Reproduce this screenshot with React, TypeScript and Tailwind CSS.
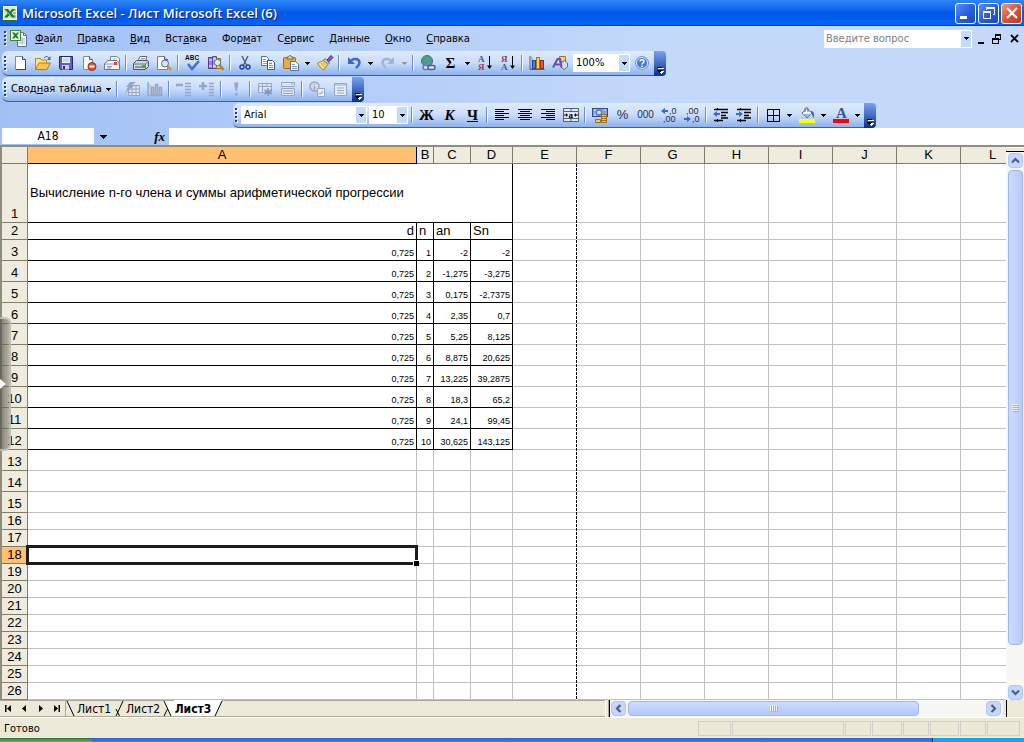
import type { ReactNode } from "react";

type IconProps = { children: ReactNode };

const Svg = ({ children }: IconProps) => (
  <svg width="16" height="16" viewBox="0 0 16 16" fill="none" aria-hidden="true" className="block shrink-0 overflow-visible">
    {children}
  </svg>
);

const Arrow = ({ faded = false, large = false }: { faded?: boolean; large?: boolean }) =>
  large ? (
    <svg width="7" height="4" viewBox="0 0 7 4" shapeRendering="crispEdges" aria-hidden="true" className="block shrink-0">
      <path d="M0 0h7v1H6v1H5v1H4v1H3V3H2V2H1V1H0z" fill="#000" />
    </svg>
  ) : (
    <svg width="5" height="3" viewBox="0 0 5 3" shapeRendering="crispEdges" aria-hidden="true" className="block shrink-0">
      <path d="M0 0h5v1H4v1H3v1H2V2H1V1H0z" fill={faded ? "#8d93a8" : "#000"} />
    </svg>
  );

const Grip = () => (
  <span className="flex w-1.5 shrink-0 justify-center">
    <svg width="3" height="15" viewBox="0 0 3 15" shapeRendering="crispEdges" aria-hidden="true">
      {[0, 4, 8, 12].map((y) => (
        <g key={y}>
          <rect x="1" y={y + 1} width="2" height="2" fill="#fff" />
          <rect x="0" y={y} width="2" height="2" fill="#27417c" />
        </g>
      ))}
    </svg>
  </span>
);

const Sep = () => (
  <span className="flex w-1.5 shrink-0 justify-center">
    <span className="h-4 w-0.5 border-l border-[#6a8ccb] border-r border-r-[#f1f9ff]" />
  </span>
);

const Tool = ({ label, children }: { label: string; children: ReactNode }) => (
  <button type="button" aria-label={label} className="flex h-6 w-[23px] shrink-0 items-center justify-center">
    {children}
  </button>
);

const Drop = ({ label, faded }: { label: string; faded?: boolean }) => (
  <button type="button" aria-label={label} className="flex h-6 w-[11px] shrink-0 items-center justify-center">
    <Arrow faded={faded} />
  </button>
);

const Bar = ({ label, className, children }: { label: string; className: string; children: ReactNode }) => (
  <div
    role="toolbar"
    aria-label={label}
    className={`flex h-[25px] w-fit items-center rounded-md border-b border-[#3b619c] bg-linear-to-b from-[#dfebfd] via-[#c8dcfb] to-[#8cb2ee] ${className}`}
  >
    <Grip />
    {children}
    <button
      type="button"
      aria-label="Параметры панели"
      className="ml-px flex h-[25px] w-3 shrink-0 items-end justify-center rounded-r-sm bg-linear-to-b from-[#7ba2ed] via-[#3f6bc4] to-[#052f8e] pb-0.5"
    >
      <svg width="7" height="7" viewBox="0 0 7 7" shapeRendering="crispEdges" aria-hidden="true">
        <path d="M1 1h6v1H1zM1 4h6v1H6v1H5v1H4V6H3V5H1z" fill="#fff" />
        <path d="M0 0h5v1H0zM0 3h5v1H4v1H3v1H2V5H1V4H0z" fill="#000" />
      </svg>
    </button>
  </div>
);

const Combo = ({ label, value, options, className }: { label: string; value: string; options: string[]; className: string }) => (
  <span className={`relative flex h-[18px] shrink-0 border border-white bg-white ${className}`}>
    <select aria-label={label} defaultValue={value} className="w-full appearance-none bg-transparent pl-0.5 text-[11px] leading-4 outline-none">
      {options.map((o) => (
        <option key={o}>{o}</option>
      ))}
    </select>
    <span className="pointer-events-none absolute inset-y-0 right-0 flex w-2.5 items-center justify-center bg-[#c3daf9]">
      <Arrow />
    </span>
  </span>
);

/* ---------- Иконки ---------- */

const XlsIcon = () => (
  <Svg>
    <rect x="0.5" y="0.5" width="15" height="15" rx="1" fill="#f3faf0" stroke="#2c6b2c" />
    <rect x="2" y="2" width="12" height="12" fill="#d6ecd0" />
    <path d="M11 5h3M11 8h3M11 11h3" stroke="#6a9c66" />
    <path d="M2 4h4l2 2.500L10 4h3L9.500 8l4 4.500H9.500L7.500 10l-2 2.500H2L5.800 8z" fill="#217a2b" />
    <path d="M3 4.500l7 8" stroke="#7cc47c" />
  </Svg>
);

const BookIcon = () => (
  <svg width="17" height="17" viewBox="0 0 17 17" fill="none" aria-hidden="true">
    <path d="M7.500 2.500h6l3 3v11h-9z" fill="#fff" stroke="#5572a8" />
    <path d="M13.500 2.500v3h3" stroke="#5572a8" />
    <path d="M10 9h5M10 11h5M8 13h7M12 7v8" stroke="#a5b8dd" />
    <rect x="0.500" y="0.500" width="10" height="10" fill="#e9f6e4" stroke="#3c8b3c" />
    <path d="M2 2.500h2.500L5.800 4l1.200-1.500h2L6.800 5.500 9 8.500H6.800L5.500 7 4.200 8.500H2l2.300-3z" fill="#217a2b" />
  </svg>
);

const NewIcon = () => (
  <Svg>
    <path d="M3.500 1.500h7l3 3v10h-10z" fill="#fff" stroke="#7b8bb0" />
    <path d="M4 14.500h9.500V5" stroke="#33456e" />
    <path d="M10.500 1.500v3h3" fill="#cbd8ee" stroke="#33456e" />
  </Svg>
);

const OpenIcon = () => (
  <Svg>
    <path d="M0.500 14V3.500h5l1 1.500h5v3" fill="#ffe287" stroke="#b8862b" />
    <path d="M0.500 14.500L4 8h11.500L12 14.500z" fill="#fcc64b" stroke="#b07818" />
    <path d="M9 3c1.500-2 4-2 5 0" stroke="#466a94" />
    <path d="M15.500 1v4H12z" fill="#466a94" />
  </Svg>
);

const SaveIcon = () => (
  <Svg>
    <path d="M1.500 1.500h13v13h-12l-1-1z" fill="#5b62d0" stroke="#24267c" />
    <rect x="4" y="2" width="8" height="6" fill="#eef4ff" />
    <path d="M5 4h6M5 6h6" stroke="#a9bce8" />
    <rect x="4" y="10" width="7" height="4.500" fill="#c9cde4" />
    <rect x="5" y="11" width="2" height="3" fill="#2b2d74" />
  </Svg>
);

const PermissionIcon = () => (
  <Svg>
    <path d="M2.500 1.500h6l3 3v10h-9z" fill="#fff" stroke="#7b8bb0" />
    <path d="M8.500 1.500v3h3" fill="#d6dff0" stroke="#4a5b86" />
    <circle cx="11" cy="11.500" r="4" fill="#e2502d" stroke="#a62a12" />
    <path d="M8.500 11.500h5" stroke="#fff" strokeWidth="2" />
  </Svg>
);

const MailIcon = () => (
  <Svg>
    <path d="M6.500 8V1.500h6l3 2V12" fill="#fff" stroke="#7482a4" />
    <path d="M9 4h4M9 6h4" stroke="#a7b5d3" />
    <path d="M0.500 8.500L4 5.500h9l2.500 3v6H0.500z" fill="#f4f6fb" stroke="#6b7794" />
    <path d="M1 9h14" stroke="#8b96b0" />
    <path d="M3 11.500h5M3 13h4" stroke="#8b96b0" />
    <rect x="10" y="7" width="3" height="3" fill="#e2502d" />
  </Svg>
);

const PrintIcon = () => (
  <Svg>
    <path d="M5 6l2-4.500h7L12 7z" fill="#fff" stroke="#5b6c93" />
    <path d="M8 3.500h4M7 5h4" stroke="#8fa1c9" />
    <path d="M0.500 8.500l3-3h11l1 1.500v4.500l-3 3h-12z" fill="#d4d7de" stroke="#4d5568" />
    <path d="M1 9h11.500l2.500-2.500M12.500 9v5" stroke="#6b7283" />
    <rect x="2" y="11" width="9" height="2" fill="#8e95a6" />
    <rect x="9" y="10" width="4" height="3" fill="#3cb53c" />
  </Svg>
);

const PreviewIcon = () => (
  <Svg>
    <path d="M1.500 1.500h7l3 3v10h-10z" fill="#fff" stroke="#6e7fa8" />
    <path d="M8.500 1.500v3h3" fill="#d6dff0" stroke="#4a5b86" />
    <circle cx="9" cy="8.500" r="3.500" fill="#cfe5fb" stroke="#596987" />
    <path d="M11.500 11l3.500 4" stroke="#d58c2a" strokeWidth="2.500" />
  </Svg>
);

const SpellIcon = () => (
  <Svg>
    <text x="0" y="5" fontSize="6.500" fontWeight="bold" fontFamily="Liberation Sans" fill="#111">ABC</text>
    <path d="M3 9l4 5 7-8" stroke="#3e6fd2" strokeWidth="2.500" />
  </Svg>
);

const ResearchIcon = () => (
  <Svg>
    <path d="M0.500 2.500h4v11h-4z" fill="#9a7de0" stroke="#4b3a93" />
    <path d="M4.500 1.500h4v12h-4z" fill="#b79be8" stroke="#5b459c" />
    <path d="M8.500 3.500h4v10h-4z" fill="#f0cf6a" stroke="#927018" />
    <path d="M1 5h3M5 4h3M1 11h3M5 11h3" stroke="#fff" />
    <circle cx="9.500" cy="7.500" r="3.200" fill="#d8ebfd" stroke="#596987" />
    <path d="M12 10.500l3.500 4.500" stroke="#c77b1e" strokeWidth="2.500" />
  </Svg>
);

const CutIcon = () => (
  <Svg>
    <path d="M5 1l4.500 9M11 1L6.500 10" stroke="#4f6386" strokeWidth="1.500" />
    <circle cx="5" cy="12" r="2" stroke="#24489c" strokeWidth="1.500" />
    <circle cx="11" cy="12" r="2" stroke="#24489c" strokeWidth="1.500" />
  </Svg>
);

const CopyIcon = () => (
  <Svg>
    <path d="M1.500 1.500h5l2 2v7h-7z" fill="#fff" stroke="#4e70b8" />
    <path d="M3 4.500h3M3 6.500h4M3 8.500h4" stroke="#7fa1e0" />
    <path d="M7.500 5.500h5l2 2v7h-7z" fill="#fff" stroke="#3457a5" />
    <path d="M9 8.500h3M9 10.500h4M9 12.500h4" stroke="#6a8dd6" />
  </Svg>
);

const PasteIcon = () => (
  <Svg>
    <rect x="0.500" y="2.500" width="12" height="11" rx="1" fill="#f0a93c" stroke="#a5661a" />
    <path d="M4 4V2h1.500L6.500.500h1L8.500 2H10v2z" fill="#ded9c8" stroke="#74664a" />
    <path d="M7.500 6.500h5l3 3v6h-8z" fill="#fff" stroke="#56709f" />
    <path d="M9 9.500h3M9 11.500h5M9 13.500h5" stroke="#7a95cc" />
  </Svg>
);

const PainterIcon = () => (
  <Svg>
    <path d="M10 5l4-4.500L16 2.500 11.500 7z" fill="#8a5bb0" stroke="#46306c" />
    <path d="M8 3.500l4.500 4.500-1.500 1.500-4.500-4z" fill="#c9ccd6" stroke="#666b7d" />
    <path d="M6.500 5.500l4.500 4L7 15C4 13.500 1.500 11 .500 8z" fill="#f7df86" stroke="#ab8526" />
    <path d="M4 8l4 5M6 7l3 4" stroke="#cda743" />
  </Svg>
);

const UndoIcon = ({ redo = false }: { redo?: boolean }) => (
  <Svg>
    <g transform={redo ? "translate(16 0) scale(-1 1)" : undefined}>
      <path d="M4 7c2.500-4 9-4 9.500.500 0 3-2 4-3.500 5.500" stroke={redo ? "#a5b4d3" : "#3b68cf"} strokeWidth="2.500" />
      <path d="M2 2v7h7z" fill={redo ? "#a5b4d3" : "#3b68cf"} />
    </g>
  </Svg>
);

const LinkIcon = () => (
  <Svg>
    <circle cx="7" cy="6" r="5.500" fill="#4d8fe0" stroke="#3a6ba5" />
    <path d="M3 3c2-3 5-2 5 0L6 5 4 8 2 6zM8 5l3-1 1 3-3 3z" fill="#49a944" />
    <rect x="3" y="10.500" width="6" height="4" rx="2" fill="#d8e2f2" stroke="#6f7e98" strokeWidth="1.500" />
    <rect x="8" y="10.500" width="7" height="4" rx="2" fill="#d8e2f2" stroke="#52617e" strokeWidth="1.500" />
  </Svg>
);

const SortIcon = ({ desc = false }: { desc?: boolean }) => (
  <Svg>
    <text x="1" y="7" fontSize="9" fontWeight="bold" fontFamily="Liberation Serif" fill={desc ? "#a33c46" : "#3b5aa8"}>
      {desc ? "Я" : "А"}
    </text>
    <text x="1" y="15" fontSize="9" fontWeight="bold" fontFamily="Liberation Serif" fill={desc ? "#3b5aa8" : "#a33c46"}>
      {desc ? "А" : "Я"}
    </text>
    <path d="M12.500 1v12" stroke="#000" />
    <path d="M10 10.500h5L12.500 14z" fill="#000" />
  </Svg>
);

const ChartIcon = () => (
  <Svg>
    <path d="M1 1v13.500h14.500" stroke="#4e5c7c" />
    <path d="M1 1l2 2v11" stroke="#8793ad" />
    <rect x="3.500" y="5.500" width="3" height="8" fill="#4a7be0" stroke="#24489c" />
    <rect x="7.500" y="2.500" width="3" height="11" fill="#ffd24a" stroke="#a8791a" />
    <rect x="11.500" y="5.500" width="3" height="8" fill="#ee5a30" stroke="#9c2a10" />
  </Svg>
);

const DrawingIcon = () => (
  <Svg>
    <path d="M7.500 1.500h6v5h-6z" fill="#f8d066" stroke="#9b762a" />
    <path d="M9 8l3.500-2.500L15.500 8v4L12 14.500 9 12z" fill="#d7dbe4" stroke="#687086" />
    <path d="M1 12.500L5.500 4h2.500l1.500 8.500M3 9.500h5.500" stroke="#6753b5" strokeWidth="2" />
  </Svg>
);

const HelpIcon = () => (
  <Svg>
    <circle cx="8" cy="8" r="6.500" fill="#3f7ae0" stroke="#7d9bd0" />
    <circle cx="8" cy="8" r="5.500" stroke="#e8f1ff" />
    <path d="M6 6.500c0-2.500 4-2.500 4 0 0 1.500-2 1.500-2 3" stroke="#fff" strokeWidth="1.500" />
    <rect x="7.300" y="10.500" width="1.500" height="1.500" fill="#fff" />
  </Svg>
);

/* Неактивные кнопки сводной таблицы */
const PivotIcon = ({ kind }: { kind: string }) => {
  const c = "#98a6c6";
  return (
    <Svg>
      {kind === "format" && (
        <>
          <path d="M4.500 4.500h11v10h-11zM4.500 8h11M4.500 11.500h11M8 4.500v10M12 4.500v10" fill="#dde5f4" stroke={c} />
          <path d="M6 1h6L7 5h3L1 12l3-6H2z" fill={c} />
        </>
      )}
      {kind === "chart" && (
        <path d="M1 1v13.500h14.500M4.500 6.500h2v7h-2zM8.500 3.500h2v10h-2zM12.500 6.500h2v7h-2z" fill="#c3cde2" stroke={c} strokeWidth="1.500" />
      )}
      {kind === "hide" && (
        <>
          <path d="M0 4h7" stroke={c} strokeWidth="2.500" />
          <path d="M9 2.500h6M9 5.500h6M9 8.500h6M9 11.500h6M9 14.500h6" stroke={c} strokeWidth="1.500" />
        </>
      )}
      {kind === "show" && (
        <>
          <path d="M0 5h8M4 1v8" stroke={c} strokeWidth="2.500" />
          <path d="M10 2.500h5M10 5.500h5M10 8.500h5M10 11.500h5M10 14.500h5" stroke={c} strokeWidth="1.500" />
        </>
      )}
      {kind === "refresh" && <path d="M6 1.500h4.500L9 10H7.500zM7 12h2.500v2.500H7z" fill={c} />}
      {kind === "hidden" && (
        <>
          <path d="M1.500 2.500h13v9h-13zM1.500 5.500h13M5.500 2.500v9M10 2.500v3" fill="#dbe4f5" stroke={c} />
          <path d="M11 7v8M7.500 9l7 4M14.500 9l-7 4" stroke="#8495bb" strokeWidth="1.500" />
        </>
      )}
      {kind === "display" && <path d="M1.500 1.500h13v4h-13zM1.500 7.500h13v7h-13zM3 10h10M3 12.500h10M11 3h2" fill="#dbe4f5" stroke={c} />}
      {kind === "field" && (
        <>
          <circle cx="5.500" cy="5.500" r="4.500" fill="#d5deef" stroke={c} strokeWidth="1.500" />
          <path d="M5.500 3v1M5.500 5v4" stroke={c} strokeWidth="1.500" />
          <path d="M8.500 7.500h7v8h-7z" fill="#e9effa" stroke={c} />
          <path d="M10 12.500h3V10" stroke={c} />
        </>
      )}
      {kind === "list" && <path d="M2.500 2.500h12v12h-12zM2.500 4h12M5 7h7M5 9.500h7M5 12h7" fill="#e6edf9" stroke={c} />}
    </Svg>
  );
};

const AlignIcon = ({ d }: { d: string }) => (
  <Svg>
    <path d={d} stroke="#000" shapeRendering="crispEdges" />
  </Svg>
);

const MergeIcon = () => (
  <Svg>
    <path d="M.500 1.500h15v13H.500zM.500 4.500h15M.500 11.500h15M8 1.500v3M8 11.500v3" fill="#dfe9fa" stroke="#555f78" />
    <path d="M1 8h3M12 8h3" stroke="#000" />
    <path d="M3 6v4l2-2zM13 6v4l-2-2z" fill="#000" />
    <text x="5.500" y="10.500" fontSize="9" fontWeight="bold" fontFamily="Liberation Serif" fill="#000">a</text>
  </Svg>
);

const MoneyIcon = () => (
  <Svg>
    <rect x="0.500" y="1.500" width="15" height="8" fill="#7ea3e2" stroke="#2d4d94" />
    <circle cx="7" cy="5.500" r="2.500" fill="#d6e4fb" stroke="#3a5ca8" />
    <path d="M2 3h2M12 3h2M2 8h2" stroke="#e7effd" />
    <path d="M9.500 7.500h5v8h-5zM3.500 12.500h5v3h-5z" fill="#ffc93c" stroke="#a66c0c" />
    <path d="M10 9.500h4M10 11.500h4M10 13.500h4" stroke="#a66c0c" />
  </Svg>
);

const DecimalIcon = ({ less = false }: { less?: boolean }) => (
  <Svg>
    <g fontSize="9" fontFamily="Liberation Sans" fill="#222f4d">
      <text x={less ? 2 : 8} y="7">{less ? ",00" : ",0"}</text>
      <text x={less ? 8 : 2} y="15">{less ? ",0" : ",00"}</text>
    </g>
    {less ? <path d="M0 11h3V9l4 3-4 3v-2H0z" fill="#3b68cf" /> : <path d="M7 3H4V1L0 4l4 3V5h3z" fill="#3b68cf" />}
  </Svg>
);

const IndentIcon = ({ more = false }: { more?: boolean }) => (
  <Svg>
    <path d="M1 2.500h14M1 13.500h9M8 5.500h7M8 8.500h5M8 11h7" stroke="#000" strokeWidth="1.500" />
    <path d="M4.500 1v1M4.500 12v3" stroke="#000" />
    {more ? <path d="M0 6h3V4l4 3-4 3V8H0z" fill="#3b68cf" /> : <path d="M7 6H4V4L0 7l4 3V8h3z" fill="#3b68cf" />}
  </Svg>
);

const BordersIcon = () => (
  <Svg>
    <path d="M2.500 2.500h12v12h-12zM8.500 2.500v12M2.500 8.500h12" stroke="#000" shapeRendering="crispEdges" />
  </Svg>
);

const FillIcon = () => (
  <Svg>
    <path d="M3 6l5-4.500L13 6l-5 5z" fill="#eef3fc" stroke="#5b6b8c" />
    <path d="M4 7h8L8 10.500z" fill="#9db6de" />
    <path d="M6 5V2c0-2 3-2 3 0v3" stroke="#5b6b8c" />
    <path d="M12 4c3 0 4 3 2.500 7C13 9 13.500 7 12 6z" fill="#3e6fc4" />
    <rect x="0" y="12" width="16" height="4" fill="#ffff00" />
  </Svg>
);

const FontColorIcon = () => (
  <Svg>
    <text x="3" y="11" fontSize="15" fontWeight="bold" fontFamily="Liberation Serif" fill="#3a5796">A</text>
    <rect x="0" y="12" width="16" height="4" fill="#ff0000" />
  </Svg>
);

/* ---------- Данные ---------- */

const menu = [
  ["", "Ф", "айл"],
  ["", "П", "равка"],
  ["", "В", "ид"],
  ["Вст", "а", "вка"],
  ["Фор", "м", "ат"],
  ["С", "е", "рвис"],
  ["", "Д", "анные"],
  ["", "О", "кно"],
  ["", "С", "правка"],
];

const columns = ["A", "B", "C", "D", "E", "F", "G", "H", "I", "J", "K", "L"];

const data: Record<number, string[]> = {
  3: ["0,725", "1", "-2", "-2"],
  4: ["0,725", "2", "-1,275", "-3,275"],
  5: ["0,725", "3", "0,175", "-2,7375"],
  6: ["0,725", "4", "2,35", "0,7"],
  7: ["0,725", "5", "5,25", "8,125"],
  8: ["0,725", "6", "8,875", "20,625"],
  9: ["0,725", "7", "13,225", "39,2875"],
  10: ["0,725", "8", "18,3", "65,2"],
  11: ["0,725", "9", "24,1", "99,45"],
  12: ["0,725", "10", "30,625", "143,125"],
};

const rowNumbers = Array.from({ length: 26 }, (_, i) => i + 1);

const statusCells = ["w-[33px]", "w-[112px]", "w-[26px]", "w-[30px]", "w-[26px]", "w-[29px]", "w-[26px]", "w-[33px]"];

/* ---------- Части окна ---------- */

const TitleBar = () => {
  const btn = "flex size-[21px] items-center justify-center rounded-[3px] border border-white";
  const blue = "bg-linear-to-br from-[#5b8cf5] via-[#2a5fe0] to-[#1a48c0]";
  return (
    <header className="flex h-[26px] items-center bg-linear-to-b from-[#2f86f7] via-[#0058e6] to-[#0364fb] px-0.5 shadow-[inset_0_-1px_0_#0040b8]">
      <XlsIcon />
      <h1 className="ml-1 flex-1 font-['Open_Sans','DejaVu_Sans_Condensed',sans-serif] text-[13px] leading-5 font-semibold text-white [text-shadow:1px_1px_#0a1883]">
        Microsoft Excel - Лист Microsoft Excel (6)
      </h1>
      <div className="flex gap-0.5">
        <button type="button" aria-label="Свернуть" className={`${btn} ${blue}`}>
          <Svg>
            <rect x="2" y="11" width="7" height="3" fill="#fff" />
          </Svg>
        </button>
        <button type="button" aria-label="Восстановить" className={`${btn} ${blue}`}>
          <Svg>
            <path d="M5.500 5V3.500h8v6H12" stroke="#fff" />
            <path d="M5 2.500h9" stroke="#fff" />
            <path d="M2.500 7.500h7v6h-7zM2 6.500h8" stroke="#fff" />
          </Svg>
        </button>
        <button type="button" aria-label="Закрыть" className={`${btn} bg-linear-to-br from-[#f0957c] via-[#de5330] to-[#c03a15]`}>
          <Svg>
            <path d="M3 3l10 10M13 3L3 13" stroke="#fff" strokeWidth="2.200" />
          </Svg>
        </button>
      </div>
    </header>
  );
};

const MenuBar = () => (
  <div className="flex h-[25px] items-center pr-1 pl-0.5">
    <Grip />
    <span className="mr-2 ml-0.5">
      <BookIcon />
    </span>
    <nav className="flex flex-1 gap-[15px] text-[11px] leading-4">
      {menu.map(([a, b, c]) => (
        <button type="button" key={a + b + c}>
          {a}
          <u>{b}</u>
          {c}
        </button>
      ))}
    </nav>
    <div className="mr-1.5 flex h-[18px] w-[148px] border border-white bg-white">
      <input aria-label="Введите вопрос" placeholder="Введите вопрос" className="w-0 flex-1 pl-px text-[11px] leading-4 outline-none placeholder:text-[#808080]" />
      <button type="button" aria-label="Последние вопросы" className="flex w-2.5 items-center justify-center bg-[#c3daf9]">
        <Arrow />
      </button>
    </div>
    <div className="flex gap-1">
      <button type="button" aria-label="Свернуть книгу" className="w-2.5">
        <svg width="10" height="10" viewBox="0 0 10 10" aria-hidden="true"><path d="M0 8h6v2H0z" fill="#000" /></svg>
      </button>
      <button type="button" aria-label="Восстановить книгу">
        <svg width="10" height="10" viewBox="0 0 10 10" fill="none" shapeRendering="crispEdges" aria-hidden="true">
          <path d="M3.500 4V1.500h5v4H7M3 .500h6M.500 5.500h6v4h-6zM0 4.500h7" stroke="#000" />
        </svg>
      </button>
      <button type="button" aria-label="Закрыть книгу" className="ml-1">
        <svg width="10" height="10" viewBox="0 0 10 10" aria-hidden="true"><path d="M1 1l7 7M8 1L1 8" stroke="#000" strokeWidth="1.800" /></svg>
      </button>
    </div>
  </div>
);

const Toolbars = () => (
  <div className="flex flex-col gap-px">
    <Bar label="Стандартная" className="ml-0.5">
      <Tool label="Создать"><NewIcon /></Tool>
      <Tool label="Открыть"><OpenIcon /></Tool>
      <Tool label="Сохранить"><SaveIcon /></Tool>
      <Tool label="Разрешения"><PermissionIcon /></Tool>
      <Tool label="Сообщение"><MailIcon /></Tool>
      <Sep />
      <Tool label="Печать"><PrintIcon /></Tool>
      <Tool label="Предварительный просмотр"><PreviewIcon /></Tool>
      <Sep />
      <Tool label="Орфография"><SpellIcon /></Tool>
      <Tool label="Справочные материалы"><ResearchIcon /></Tool>
      <Sep />
      <Tool label="Вырезать"><CutIcon /></Tool>
      <Tool label="Копировать"><CopyIcon /></Tool>
      <Tool label="Вставить"><PasteIcon /></Tool>
      <Drop label="Варианты вставки" />
      <Tool label="Формат по образцу"><PainterIcon /></Tool>
      <Sep />
      <Tool label="Отменить"><UndoIcon /></Tool>
      <Drop label="Список отмены" />
      <Tool label="Вернуть"><UndoIcon redo /></Tool>
      <Drop label="Список возврата" faded />
      <Sep />
      <Tool label="Гиперссылка"><LinkIcon /></Tool>
      <Tool label="Автосумма">
        <span className="font-['Liberation_Serif',serif] text-[15px] leading-4 font-bold">Σ</span>
      </Tool>
      <Drop label="Функции" />
      <Tool label="Сортировка по возрастанию"><SortIcon /></Tool>
      <Tool label="Сортировка по убыванию"><SortIcon desc /></Tool>
      <Sep />
      <Tool label="Мастер диаграмм"><ChartIcon /></Tool>
      <Tool label="Рисование"><DrawingIcon /></Tool>
      <Combo label="Масштаб" value="100%" options={["200%", "100%", "75%", "50%"]} className="ml-0.5 w-[57px]" />
      <Tool label="Справка"><HelpIcon /></Tool>
    </Bar>

    <Bar label="Сводные таблицы" className="ml-0.5">
      <button type="button" className="flex h-6 w-[106px] shrink-0 items-center gap-1 pl-[3px] text-[11px] leading-4 whitespace-nowrap">
        <span>Свод<u>н</u>ая таблица</span>
        <Arrow />
      </button>
      <Sep />
      <Tool label="Формат отчета"><PivotIcon kind="format" /></Tool>
      <Tool label="Диаграмма"><PivotIcon kind="chart" /></Tool>
      <Sep />
      <Tool label="Скрыть детали"><PivotIcon kind="hide" /></Tool>
      <Tool label="Отобразить детали"><PivotIcon kind="show" /></Tool>
      <Sep />
      <Tool label="Обновить данные"><PivotIcon kind="refresh" /></Tool>
      <Sep />
      <Tool label="Скрытые элементы"><PivotIcon kind="hidden" /></Tool>
      <Tool label="Всегда отображать"><PivotIcon kind="display" /></Tool>
      <Sep />
      <Tool label="Параметры поля"><PivotIcon kind="field" /></Tool>
      <Tool label="Список полей"><PivotIcon kind="list" /></Tool>
    </Bar>

    <Bar label="Форматирование" className="ml-[233px]">
      <Combo label="Шрифт" value="Arial" options={["Arial", "Tahoma", "Verdana"]} className="mx-0.5 w-[126px]" />
      <Combo label="Размер" value="10" options={["8", "9", "10", "11", "12"]} className="mr-px w-[39px]" />
      <Sep />
      <Tool label="Полужирный"><b className="font-['Liberation_Serif',serif] text-[15px] leading-4">Ж</b></Tool>
      <Tool label="Курсив"><b className="font-['Liberation_Serif',serif] text-[15px] leading-4 italic">К</b></Tool>
      <Tool label="Подчеркнутый"><b className="font-['Liberation_Serif',serif] text-[15px] leading-4 underline">Ч</b></Tool>
      <Sep />
      <Tool label="По левому краю"><AlignIcon d="M1 2.500h14M1 4.500h9M1 6.500h14M1 8.500h9M1 10.500h14M1 12.500h9" /></Tool>
      <Tool label="По центру"><AlignIcon d="M1 2.500h14M3 4.500h10M1 6.500h14M3 8.500h10M1 10.500h14M3 12.500h10" /></Tool>
      <Tool label="По правому краю"><AlignIcon d="M1 2.500h14M6 4.500h9M1 6.500h14M6 8.500h9M1 10.500h14M6 12.500h9" /></Tool>
      <Tool label="Объединить и поместить в центре"><MergeIcon /></Tool>
      <Sep />
      <Tool label="Денежный формат"><MoneyIcon /></Tool>
      <Tool label="Процентный формат"><span className="font-['Liberation_Sans',sans-serif] text-[13px] leading-4 text-[#222f4d]">%</span></Tool>
      <Tool label="Формат с разделителями"><span className="font-['Liberation_Sans',sans-serif] text-[10px] leading-4 text-[#222f4d]">000</span></Tool>
      <Tool label="Увеличить разрядность"><DecimalIcon /></Tool>
      <Tool label="Уменьшить разрядность"><DecimalIcon less /></Tool>
      <Sep />
      <Tool label="Уменьшить отступ"><IndentIcon /></Tool>
      <Tool label="Увеличить отступ"><IndentIcon more /></Tool>
      <Sep />
      <Tool label="Границы"><BordersIcon /></Tool>
      <Drop label="Виды границ" />
      <Tool label="Цвет заливки"><FillIcon /></Tool>
      <Drop label="Выбор цвета заливки" />
      <Tool label="Цвет шрифта"><FontColorIcon /></Tool>
      <Drop label="Выбор цвета шрифта" />
    </Bar>
  </div>
);

const FormulaBar = () => (
  <div className="flex h-[17px]">
    <input
      aria-label="Имя ячейки"
      defaultValue="A18"
      className="mb-px ml-0.5 w-[92px] bg-white text-center text-xs leading-4 outline-none"
    />
    <button type="button" aria-label="Список имен" className="flex w-[19px] items-center justify-center">
      <Arrow large />
    </button>
    <button
      type="button"
      aria-label="Вставка функции"
      className="w-14 pr-1 text-right font-['Liberation_Serif',serif] text-[13px] leading-4 font-bold italic"
    >
      fx
    </button>
    <input aria-label="Строка формул" className="flex-1 bg-white px-1 font-['Liberation_Sans',sans-serif] text-[13px] outline-none" />
  </div>
);

const Row = ({ n }: { n: number }) => {
  const height = n === 1 ? "h-[59px]" : n > 2 && n < 16 ? "h-[21px]" : "h-[17px]";
  const selected = n === 18;
  const black = "border-r border-b border-black";
  const grey = "border-r border-b border-[#c0c0c0]";
  const values = data[n];

  return (
    <tr className={height}>
      <th
        scope="row"
        className={`border-r border-b border-[#7f7d68] p-0 text-center align-bottom font-normal ${selected ? "bg-[#ffc06f]" : "bg-[#efebde]"}`}
      >
        {n}
      </th>
      {n === 1 && (
        <td colSpan={4} className={`${black} px-0.5 py-0 align-middle`}>
          Вычисление n-го члена и суммы арифметической прогрессии
        </td>
      )}
      {n === 2 && (
        <>
          <td className={`${black} px-0.5 py-0 text-right`}>d</td>
          <td className={`${black} px-0.5 py-0`}>n</td>
          <td className={`${black} px-0.5 py-0`}>an</td>
          <td className={`${black} px-0.5 py-0`}>Sn</td>
        </>
      )}
      {values?.map((v, i) => (
        <td key={i} className={`${black} px-0.5 pt-0 pb-px text-right align-bottom text-[9px] leading-3`}>
          {v}
        </td>
      ))}
      {n > 12 &&
        [0, 1, 2, 3].map((i) => (
          <td key={i} className={`${grey} p-0 ${selected && i === 0 ? "relative" : ""}`}>
            {selected && i === 0 && (
              <>
                <span className="absolute -inset-0.5 border-3 border-[#1c1c1c]" />
                <span className="absolute -right-[3px] -bottom-[3px] z-10 size-1.5 border-t border-l border-white bg-black" />
              </>
            )}
          </td>
        ))}
      {columns.slice(4).map((c) => (
        <td key={c} className={`${grey} p-0`} />
      ))}
    </tr>
  );
};

const Sheet = () => (
  <div className="min-w-0 flex-1 overflow-hidden bg-white">
    <div className="relative">
      <table className="w-[986px] table-fixed border-separate border-spacing-0 font-['Liberation_Sans',sans-serif] text-[13px] leading-4">
        <colgroup>
          <col className="w-[26px]" />
          <col className="w-[389px]" />
          <col className="w-[17px]" />
          <col className="w-[37px]" />
          <col className="w-[42px]" />
          {columns.slice(4).map((c) => (
            <col key={c} className="w-16" />
          ))}
        </colgroup>
        <thead>
          <tr className="h-[17px]">
            <td className="border-r border-b border-[#7f7d68] bg-[#efebde] p-0" />
            {columns.map((c) => (
              <th
                key={c}
                scope="col"
                className={`border-r border-b p-0 text-center font-normal ${c === "A" ? "border-[#000080] bg-[#ffc06f]" : "border-[#7f7d68] bg-[#efebde]"}`}
              >
                {c}
              </th>
            ))}
          </tr>
        </thead>
        <tbody>
          {rowNumbers.map((n) => (
            <Row key={n} n={n} />
          ))}
        </tbody>
      </table>
      {/* Граница страницы после столбца E */}
      <span className="absolute top-[17px] bottom-0 left-[574px] w-px bg-[repeating-linear-gradient(#000_0_3px,#fff_3px_4px)]" />
    </div>
  </div>
);

const ScrollButton = ({ label, d }: { label: string; d: string }) => (
  <button type="button" aria-label={label} className="flex size-[15px] shrink-0 items-center justify-center rounded-sm border border-[#b0c6f6] bg-[#c6d7fd]">
    <svg width="9" height="9" viewBox="0 0 9 9" fill="none" aria-hidden="true">
      <path d={d} stroke="#4d6185" strokeWidth="2.200" />
    </svg>
  </button>
);

const VerticalScroll = () => (
  <div className="flex w-[18px] shrink-0 flex-col items-center bg-[#f7f7f3]">
    <span className="h-[5px] w-full border-b border-black bg-[#ece9d8] shadow-[inset_0_1px_#fff]" />
    <span className="mt-px"><ScrollButton label="Вверх" d="M1 6.500L4.500 3 8 6.500" /></span>
    <div className="mt-0.5 flex h-[475px] w-[15px] items-center justify-center rounded-sm border border-[#9fb8f0] bg-linear-to-r from-[#cddcfe] to-[#b7cafa]">
      <svg width="7" height="8" viewBox="0 0 7 8" shapeRendering="crispEdges" aria-hidden="true">
        <path d="M0 .500h6M0 2.500h6M0 4.500h6M0 6.500h6" stroke="#eef4fe" />
        <path d="M1 1.500h6M1 3.500h6M1 5.500h6M1 7.500h6" stroke="#8cb0f8" />
      </svg>
    </div>
    <span className="mt-auto"><ScrollButton label="Вниз" d="M1 2.500L4.500 6 8 2.500" /></span>
  </div>
);

const NavButton = ({ label, d }: { label: string; d: string }) => (
  <button type="button" aria-label={label} className="flex w-4 items-center justify-center">
    <svg width="7" height="7" viewBox="0 0 7 7" aria-hidden="true">
      <path d={d} fill="#000" />
    </svg>
  </button>
);

const SheetTabs = () => (
  <div className="flex h-[18px] border-b border-b-white bg-[#ece9d8]">
    <div className="flex min-w-0 flex-1 border-b border-[#aca899] shadow-[inset_0_1px_#aca899]">
      <NavButton label="Первый лист" d="M0 0h1.500v7H0zM6 0v7L2 3.500z" />
      <NavButton label="Предыдущий лист" d="M5 0v7L1 3.500z" />
      <NavButton label="Следующий лист" d="M2 0v7l4-3.500z" />
      <NavButton label="Последний лист" d="M1 0v7l4-3.500zM5.500 0H7v7H5.500z" />
      <div role="tablist" className="ml-px flex border-l border-[#aca899] text-xs leading-[18px]">
        <svg width="11" height="16" viewBox="0 0 11 16" aria-hidden="true">
          <path d="M1 1l7 15h3V1z" fill="#ece9d8" />
          <path d="M1 1l7 15" stroke="#000" />
        </svg>
        <button type="button" role="tab" aria-selected="false" className="w-[34px]">Лист1</button>
        <svg width="15" height="16" viewBox="0 0 15 16" fill="none" aria-hidden="true">
          <path d="M12 1L5 16M5 9l3.500 7" stroke="#000" />
        </svg>
        <button type="button" role="tab" aria-selected="false" className="w-[34px]">Лист2</button>
        <svg width="14" height="16" viewBox="0 0 14 16" fill="none" aria-hidden="true">
          <path d="M4 1l7 15h3V1z" fill="#fff" />
          <path d="M4 1l7 15M7.500 9L4 16" stroke="#000" />
        </svg>
        <button type="button" role="tab" aria-selected="true" className="w-[38px] bg-white font-bold">Лист3</button>
        <svg width="11" height="16" viewBox="0 0 11 16" aria-hidden="true">
          <path d="M0 0h10L3 16H0z" fill="#fff" />
          <path d="M10 1L3 16" stroke="#000" />
        </svg>
      </div>
    </div>
    <span className="w-1 border-x border-l-white border-r-[#aca899]" />
    <div className="flex w-[398px] items-center border-l border-black bg-[#f7f7f3] pl-px">
      <ScrollButton label="Влево" d="M6.500 1L3 4.500 6.500 8" />
      <div className="ml-0.5 flex h-[15px] w-[291px] items-center justify-center rounded-sm border border-[#9fb8f0] bg-linear-to-b from-[#cddcfe] to-[#b3c8fa]">
        <svg width="8" height="7" viewBox="0 0 8 7" shapeRendering="crispEdges" aria-hidden="true">
          <path d="M.500 0v6M2.500 0v6M4.500 0v6M6.500 0v6" stroke="#eef4fe" />
          <path d="M1.500 1v6M3.500 1v6M5.500 1v6M7.500 1v6" stroke="#8cb0f8" />
        </svg>
      </div>
      <span className="mr-0.5 ml-auto"><ScrollButton label="Вправо" d="M2.500 1L6 4.500 2.500 8" /></span>
      <span className="h-full w-1 border-r border-black bg-[#ece9d8]" />
    </div>
    <span className="w-[17px] bg-[#ece9d8]" />
  </div>
);

const StatusBar = () => (
  <footer className="flex h-5 items-end bg-[#ece9d8] px-1 pb-0.5 text-[11px] leading-[14px]">
    <span className="flex-1">Готово</span>
    <div className="flex gap-px">
      {statusCells.map((w, i) => (
        <span key={i} className={`h-[15px] border border-[#d0cfc9] ${w}`} />
      ))}
    </div>
  </footer>
);

export default function App() {
  return (
    <div className="relative flex min-h-screen w-full flex-col overflow-hidden bg-[#ece9d8] font-['DejaVu_Sans_Condensed','DejaVu_Sans',sans-serif] text-black">
      <TitleBar />
      <div className="bg-linear-to-r from-[#a1c0f5] to-[#c4d9fa] to-65%">
        <MenuBar />
        <Toolbars />
        <FormulaBar />
      </div>
      <main className="flex border-t-2 border-l-2 border-[#8f8d7c]">
        <Sheet />
        <VerticalScroll />
      </main>
      <SheetTabs />
      <StatusBar />
      <div className="flex h-1 bg-linear-to-b from-[#2b62d6] to-[#3b80ea]">
        <span className="w-[92px] rounded-tr-sm bg-linear-to-b from-[#2f7a35] to-[#62b562]" />
        <span className="ml-auto w-[92px] border-l border-[#10387c] bg-[#16a4f0]" />
      </div>

      {/* Ручка выдвижной панели */}
      <button
        type="button"
        aria-label="Показать панель"
        className="absolute top-[317px] left-0 flex h-[134px] w-[11px] items-center rounded-r-md border-2 border-l-0 border-[#d9d7cb]/70 bg-linear-to-r from-[#5f5d54]/80 to-[#7b796f]/50"
      >
        <svg width="7" height="10" viewBox="0 0 7 10" aria-hidden="true">
          <path d="M0 0l6 5-6 5z" fill="#fff" />
        </svg>
      </button>
    </div>
  );
}
